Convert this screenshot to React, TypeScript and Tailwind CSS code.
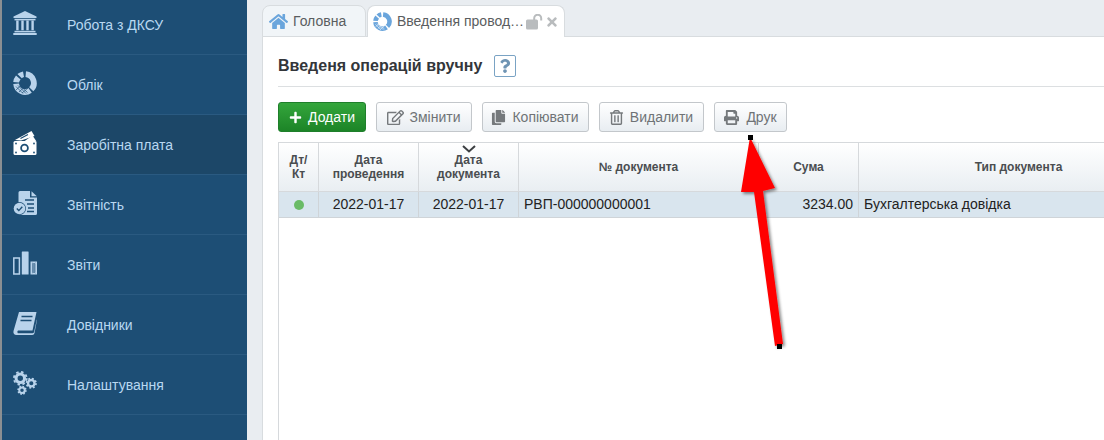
import React from "react";
import { FaHome, FaPlus, FaRegEdit, FaCopy, FaRegTrashAlt, FaPrint, FaTimes, FaQuestion } from "react-icons/fa";

const c = "#b9d3eb";

function Bank() {
  return (
    <svg width="24" height="24" viewBox="0 0 24 24">
      <path d="M12 0L23.5 5.5V7H0.5V5.5Z" fill={c} />
      <rect x="1.5" y="7.8" width="21" height="1.6" fill={c} />
      <path d="M3.2 9.5h2.4v9.8H3.2ZM8.3 9.5h2.4v9.8H8.3ZM13.3 9.5h2.4v9.8h-2.4ZM18.4 9.5h2.4v9.8h-2.4Z" fill={c} />
      <rect x="1.5" y="19.8" width="21" height="1.6" fill={c} />
      <rect x="0.3" y="22" width="23.4" height="2" fill={c} />
    </svg>
  );
}

function Donut({ size = 24, color = c, dark = "#1d4e75" }: { size?: number; color?: string; dark?: string }) {
  return (
    <svg width={size} height={size} viewBox="0 0 24 24">
      <path d="M13 0.25A11.8 11.8 0 0 1 20.3 20.3L16.2 16.2A6 6 0 0 0 12.5 6Z" fill={color} />
      <path d="M18.8 21.7A11.8 11.8 0 0 1 0.25 13L6 12.5A6 6 0 0 0 15.4 16.9Z" fill={color} />
      <path d="M3 15.5l7 7M5 14.5l8 8M7.5 15l7 6.5M3 19l6-5.5M6 21l6-5.5M9 22l6-5" stroke={dark} strokeWidth="0.7" />
      <path d="M0.25 11A11.8 11.8 0 0 1 3 4.4L7.6 8.4A6 6 0 0 0 6 11.5Z" fill={color} />
      <path d="M4.4 3A11.8 11.8 0 0 1 10 0.4L11 6.1A6 6 0 0 0 8.8 7.2Z" fill={color} />
    </svg>
  );
}

function Money() {
  return (
    <svg width="24" height="24" viewBox="0 0 24 24">
      <path d="M2 9L18.5 0L21.5 5L8 9.5Z" fill="#fff" />
      <path d="M7.5 7.5L15 3.5" stroke="#1d4e75" strokeWidth="1.2" />
      <path d="M19.5 4.5L23.5 10.5H11Z" fill="#fff" />
      <rect x="0.5" y="10" width="23" height="14" rx="1.5" fill="#fff" />
      <circle cx="11.5" cy="17" r="3.4" fill="none" stroke="#1d4e75" strokeWidth="1.8" />
      <circle cx="3" cy="12.5" r="0.9" fill="#1d4e75" />
      <circle cx="21" cy="12.5" r="0.9" fill="#1d4e75" />
      <circle cx="3" cy="21.5" r="0.9" fill="#1d4e75" />
      <circle cx="21" cy="21.5" r="0.9" fill="#1d4e75" />
    </svg>
  );
}

function DocCheck() {
  return (
    <svg width="24" height="24" viewBox="0 0 24 24">
      <path d="M5.5 1.5A1.5 1.5 0 0 1 7 0H17V6.5H24V22.5A1.5 1.5 0 0 1 22.5 24H7A1.5 1.5 0 0 1 5.5 22.5Z" fill={c} />
      <path d="M18.5 0.3L23.8 5.2H18.5Z" fill={c} />
      <path d="M12 9H21M14 13H21M15 17H21M14 20.5H21" stroke="#1d4e75" strokeWidth="1.3" />
      <circle cx="6.5" cy="17.5" r="6.5" fill="#1d4e75" />
      <circle cx="6.5" cy="17.5" r="5.8" fill={c} />
      <path d="M3.8 17.6L5.8 19.6L9.3 15.8" fill="none" stroke="#1d4e75" strokeWidth="1.4" />
    </svg>
  );
}

function Bars() {
  return (
    <svg width="24" height="24" viewBox="0 0 24 24">
      <rect x="0.8" y="7" width="5.6" height="16" fill="none" stroke={c} strokeWidth="1.5" />
      <rect x="8.8" y="0.5" width="6.8" height="23" rx="0.5" fill={c} />
      <rect x="17.5" y="10.5" width="6.5" height="13" fill={c} />
      <path d="M19 12l3.5 2M22.5 12l-3.5 2M19 14l3.5 2M22.5 14l-3.5 2M19 16l3.5 2M22.5 16l-3.5 2M19 18l3.5 2M22.5 18l-3.5 2M19 20l3.5 2M22.5 20l-3.5 2" stroke="#1d4e75" strokeWidth="0.6" />
    </svg>
  );
}

function Book() {
  return (
    <svg width="24" height="24" viewBox="0 0 24 24">
      <path d="M6 1H23.5L19.5 19.5H5A2 2 0 0 0 4.8 22.2H19.5C20.5 22.2 21 21.6 21.2 20.6L23.8 8.5L24 9L21.5 22A2.4 2.4 0 0 1 19.2 24H3.5C1 24 0 22 0.5 20Z" fill={c} />
      <path d="M8.5 5.5H19.5M7.5 9.5H18.5" stroke="#1d4e75" strokeWidth="1.5" />
    </svg>
  );
}

function Gear({ x, y, r }: { x: number; y: number; r: number }) {
  const t = r - 0.9;
  const dash = (2 * Math.PI * t) / 16;
  return (
    <g>
      <circle cx={x} cy={y} r={r * 0.58} fill="none" stroke={c} strokeWidth={r * 0.42} />
      <circle cx={x} cy={y} r={t} fill="none" stroke={c} strokeWidth="1.8" strokeDasharray={`${dash} ${dash}`} />
    </g>
  );
}

function Gears() {
  return (
    <svg width="24" height="24" viewBox="0 0 24 24">
      <Gear x={7.3} y={7.3} r={7.3} />
      <Gear x={18.3} y={12.2} r={5.6} />
      <Gear x={9} y={19.3} r={4.7} />
    </svg>
  );
}

const items: { label: string; icon: React.ReactNode; active?: boolean }[] = [
  { label: "Робота з ДКСУ", icon: <Bank /> },
  { label: "Облік", icon: <Donut /> },
  { label: "Заробітна плата", icon: <Money />, active: true },
  { label: "Звітність", icon: <DocCheck /> },
  { label: "Звіти", icon: <Bars /> },
  { label: "Довідники", icon: <Book /> },
  { label: "Налаштування", icon: <Gears /> },
];

function Btn({ icon, label, w, tight }: { icon: React.ReactNode; label: string; w: string; tight?: boolean }) {
  return (
    <div className={`${w} h-[30px] flex items-center justify-center rounded-[3px] border border-[#c3c7cb] bg-gradient-to-b from-[#ffffff] to-[#e8edf1] text-[14px] text-[#6f7376] ${tight ? "gap-[6px] pr-[1px]" : "gap-[7px]"}`}>
      {icon}
      <span>{label}</span>
    </div>
  );
}

function Th({ w, children }: { w: string; children: React.ReactNode }) {
  return (
    <div className={`${w} shrink-0 relative flex items-center justify-center text-center border-r border-[#d6d9dc] text-[12px] leading-[14px] font-bold text-[#4a4d50]`}>
      {children}
    </div>
  );
}

function Td({ w, children, cls }: { w: string; children?: React.ReactNode; cls?: string }) {
  return (
    <div className={`${w} shrink-0 flex items-center border-r border-[#cfd4d8] text-[14px] text-[#222] ${cls ?? ""}`}>
      {children}
    </div>
  );
}

export default function App() {
  return (
    <div className="relative w-[1104px] h-[440px] overflow-hidden flex bg-white font-['Liberation_Sans',Arial,sans-serif]">
      <aside className="w-[247px] shrink-0 h-full overflow-hidden border-l-2 border-[#8b8f92] bg-[#1d4e75]">
        <div className="-mt-[5px]">
          {items.map((it) => (
            <div key={it.label} className={`h-[60px] flex items-center border-b border-[#2a5a81] ${it.active ? "bg-[#1c4768]" : ""}`}>
              <div className="w-[65px] pl-[11px] pb-[3px] shrink-0 flex items-center">{it.icon}</div>
              <span className="text-[14px] text-[#b9d8f1] pt-[2px]">{it.label}</span>
            </div>
          ))}
        </div>
      </aside>

      <main className="flex-1 min-w-0 flex flex-col bg-[#e9edf1] pl-[15px]">
        <div className="h-[37px] shrink-0 pt-[5px] flex gap-[1px] border-b border-[#d8dcdf] relative">
          <div className="w-[104px] h-[32px] rounded-t-[8px] border border-[#d8dcdf] bg-[#f1f5f8] flex items-center pl-[6px] gap-[5px] text-[14px] text-[#5a5d60]">
            <FaHome size={19} color="#6aa5dc" />
            <span>Головна</span>
          </div>
          <div className="w-[198px] h-[32px] rounded-t-[8px] border border-b-0 border-[#d8dcdf] bg-white flex items-center pl-[5px] text-[14px] text-[#5a5d60] relative z-10">
            <Donut size={19} color="#6aa5dc" dark="#fff" />
            <span className="ml-[5px]">Введення провод…</span>
            <svg width="17" height="16" viewBox="0 0 17 16" className="ml-[2px]">
              <rect x="0" y="5.5" width="12" height="10" rx="1.5" fill="#b9bcbe" />
              <path d="M8.2 6V4.2A3.4 3.4 0 0 1 15.2 4.2V6.5" fill="none" stroke="#b9bcbe" strokeWidth="2" />
            </svg>
            <FaTimes size={14} color="#b9bcbe" className="ml-[2px]" />
          </div>
        </div>

        <div className="flex-1 min-h-0 bg-white border-l border-[#d8dcdf] pl-[15px]">
          <div className="h-[50px] flex items-center border-b border-[#dcdfe1] pt-[9px]">
            <h1 className="text-[16px] font-bold text-[#33363a] leading-none">Введеня операцій вручну</h1>
            <div className="ml-[12px] w-[22px] h-[22px] rounded-[2px] border border-[#7aa3c4] flex items-center justify-center">
              <FaQuestion size={14} color="#6f94b3" />
            </div>
          </div>

          <div className="mt-[15px] flex gap-[10px]">
            <div className="w-[88px] h-[30px] flex items-center justify-center gap-[6px] rounded-[3px] border border-[#1f7f2b] bg-gradient-to-b from-[#34a63c] to-[#1c8427] text-[14px] text-white">
              <FaPlus size={13} color="#fff" />
              <span>Додати</span>
            </div>
            <Btn tight w="w-[96px]" label="Змінити" icon={<FaRegEdit size={17} color="#75797c" />} />
            <Btn tight w="w-[107px]" label="Копіювати" icon={<FaCopy size={15} color="#75797c" />} />
            <Btn tight w="w-[105px]" label="Видалити" icon={<FaRegTrashAlt size={15} color="#75797c" />} />
            <Btn w="w-[73px]" label="Друк" icon={<FaPrint size={15} color="#75797c" />} />
          </div>

          <div className="mt-[10px] h-[400px] border-l border-t border-[#d6d9dc] w-[900px]">
            <div className="h-[49px] flex bg-gradient-to-b from-[#ffffff] to-[#e9eef2] border-b border-[#d6d9dc]">
              <Th w="w-[40px]">Дт/<br />Кт</Th>
              <Th w="w-[100px]">Дата<br />проведення</Th>
              <Th w="w-[100px]">
                <svg width="14" height="8" viewBox="0 0 14 8" className="absolute top-[2px] left-[43px]">
                  <path d="M1 1L7 6.5L13 1" fill="none" stroke="#3c3f42" strokeWidth="2" />
                </svg>
                <span>Дата<br />документа</span>
              </Th>
              <Th w="w-[240px]">№ документа</Th>
              <Th w="w-[100px]">Сума</Th>
              <Th w="w-[320px]">Тип документа</Th>
            </div>
            <div className="h-[26px] flex bg-[#d9e5ee] border-b border-[#cfd4d8]">
              <Td w="w-[40px]" cls="justify-center"><span className="w-[10px] h-[10px] rounded-full bg-[#6abb66]" /></Td>
              <Td w="w-[100px]" cls="justify-center">2022-01-17</Td>
              <Td w="w-[100px]" cls="justify-center">2022-01-17</Td>
              <Td w="w-[240px]" cls="pl-[5px]">РВП-000000000001</Td>
              <Td w="w-[100px]" cls="justify-end pr-[5px]">3234.00</Td>
              <Td w="w-[320px]" cls="pl-[5px]">Бухгалтерська довідка</Td>
            </div>
          </div>
        </div>
      </main>

      <svg width="1104" height="440" viewBox="0 0 1104 440" className="absolute inset-0 pointer-events-none">
        <defs>
          <filter id="sh" x="-30%" y="-10%" width="160%" height="120%">
            <feDropShadow dx="2" dy="2" stdDeviation="1.5" floodColor="#000" floodOpacity="0.45" />
          </filter>
        </defs>
        <path d="M750 137L775 188L763 191L783 344L775 346L754 192L741 192Z" fill="#ff0000" filter="url(#sh)" />
        <rect x="748" y="135" width="5" height="5" fill="#000" />
        <rect x="777" y="344" width="5" height="5" fill="#000" />
      </svg>
    </div>
  );
}
